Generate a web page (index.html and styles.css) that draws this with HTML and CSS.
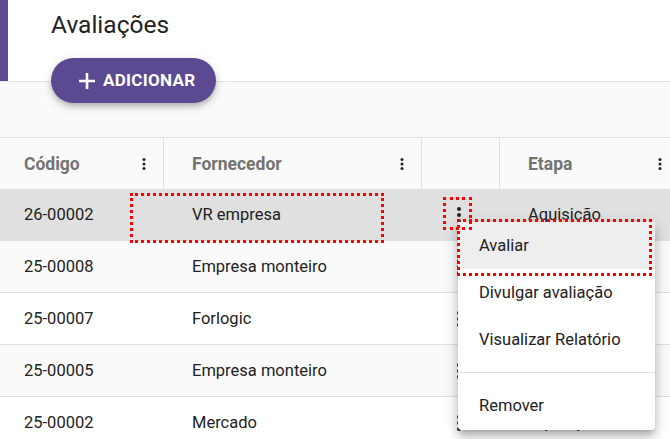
FILE: index.html
```html
<!DOCTYPE html>
<html lang="pt-BR">
<head>
<meta charset="utf-8">
<title>Avaliações</title>
<link rel="stylesheet" href="styles.css">
</head>
<body>
<div class="page">
  <header class="topbar">
    <div class="accent"></div>
    <div class="topbar-content">
      <h1 class="title">Avaliações</h1>
      <button class="add-btn" type="button">
        <svg class="plus" viewBox="0 0 18 18" aria-hidden="true"><path d="M9 1v16M1 9h16"/></svg>
        <span>ADICIONAR</span>
      </button>
    </div>
  </header>
  <div class="band"></div>

  <div class="grid">
    <div class="grid-head">
      <div class="head-cell first"><span>Código</span><svg class="kebab-sm" viewBox="0 0 24 24"><circle cx="12" cy="6" r="2"/><circle cx="12" cy="12" r="2"/><circle cx="12" cy="18" r="2"/></svg></div>
      <div class="head-cell"><span>Fornecedor</span><svg class="kebab-sm" viewBox="0 0 24 24"><circle cx="12" cy="6" r="2"/><circle cx="12" cy="12" r="2"/><circle cx="12" cy="18" r="2"/></svg></div>
      <div class="head-cell"></div>
      <div class="head-cell"><span>Etapa</span><svg class="kebab-sm" viewBox="0 0 24 24"><circle cx="12" cy="6" r="2"/><circle cx="12" cy="12" r="2"/><circle cx="12" cy="18" r="2"/></svg></div>
    </div>

    <div class="row hover">
      <div class="cell first">26-00002</div>
      <div class="cell">VR empresa</div>
      <div class="cell actions"><svg class="kebab" viewBox="0 0 24 24"><circle cx="12" cy="6" r="2"/><circle cx="12" cy="12" r="2"/><circle cx="12" cy="18" r="2"/></svg></div>
      <div class="cell">Aquisição</div>
    </div>
    <div class="row alt">
      <div class="cell first">25-00008</div>
      <div class="cell">Empresa monteiro</div>
      <div class="cell actions"><svg class="kebab" viewBox="0 0 24 24"><circle cx="12" cy="6" r="2"/><circle cx="12" cy="12" r="2"/><circle cx="12" cy="18" r="2"/></svg></div>
      <div class="cell">Aquisição</div>
    </div>
    <div class="row">
      <div class="cell first">25-00007</div>
      <div class="cell">Forlogic</div>
      <div class="cell actions"><svg class="kebab" viewBox="0 0 24 24"><circle cx="12" cy="6" r="2"/><circle cx="12" cy="12" r="2"/><circle cx="12" cy="18" r="2"/></svg></div>
      <div class="cell">Aquisição</div>
    </div>
    <div class="row alt">
      <div class="cell first">25-00005</div>
      <div class="cell">Empresa monteiro</div>
      <div class="cell actions"><svg class="kebab" viewBox="0 0 24 24"><circle cx="12" cy="6" r="2"/><circle cx="12" cy="12" r="2"/><circle cx="12" cy="18" r="2"/></svg></div>
      <div class="cell">Aquisição</div>
    </div>
    <div class="row">
      <div class="cell first">25-00002</div>
      <div class="cell">Mercado</div>
      <div class="cell actions"><svg class="kebab" viewBox="0 0 24 24"><circle cx="12" cy="6" r="2"/><circle cx="12" cy="12" r="2"/><circle cx="12" cy="18" r="2"/></svg></div>
      <div class="cell">Aquisição</div>
    </div>
  </div>

  <ul class="menu">
    <li class="menu-item active">Avaliar</li>
    <li class="menu-item">Divulgar avaliação</li>
    <li class="menu-item">Visualizar Relatório</li>
    <li class="menu-divider"></li>
    <li class="menu-item">Remover</li>
  </ul>

  <div class="mark mark-supplier"></div>
  <div class="mark mark-kebab"></div>
  <div class="mark mark-item"></div>
</div>
</body>
</html>
```

FILE: styles.css
```css
* { box-sizing: border-box; }

html, body {
  margin: 0;
  padding: 0;
}

body {
  font-family: Roboto, "Liberation Sans", Arial, sans-serif;
  color: #212121;
  background: #fff;
}

.page {
  position: relative;
  width: 670px;
  height: 439px;
  overflow: hidden;
}

/* top bar */
.topbar {
  display: flex;
  height: 82px;
  background: #fff;
  border-bottom: 1px solid #e4e4e4;
}

.accent {
  flex: none;
  width: 8px;
  background: #5b4a92;
}

.topbar-content {
  padding: 11px 0 0 43px;
}

.title {
  margin: 0;
  font-size: 24.5px;
  line-height: 28px;
  font-weight: 400;
  color: #232323;
}

.add-btn {
  position: relative;
  z-index: 2;
  margin-top: 19px;
  height: 45px;
  display: flex;
  align-items: center;
  gap: 7px;
  padding: 0 21px 0 27px;
  border: 0;
  border-radius: 23px;
  background: #5b4a92;
  color: #fff;
  font-family: Roboto, "Liberation Sans", Arial, sans-serif;
  font-weight: 700;
  font-size: 17px;
  line-height: 1;
  letter-spacing: 0.3px;
  box-shadow: 0 3px 5px -1px rgba(0,0,0,.18), 0 5px 8px 0 rgba(0,0,0,.12), 0 1px 12px 0 rgba(0,0,0,.08);
}

.plus {
  width: 18px;
  height: 18px;
  stroke: #fff;
  stroke-width: 2.6;
  fill: none;
}

.band {
  height: 55px;
  background: #fafafa;
}

/* grid */
.grid {
  width: 680px;
}

.grid-head {
  display: grid;
  grid-template-columns: 164px 258px 78px 180px;
  height: 52px;
  border-top: 1px solid #e0e0e0;
  background: #fafafa;
}

.head-cell {
  display: flex;
  align-items: center;
  justify-content: space-between;
  padding: 0 10px 0 28px;
  border-right: 1px solid #e0e0e0;
  font-size: 17.5px;
  font-weight: 700;
  color: #737373;
}

.head-cell.first {
  padding-left: 24px;
}

.kebab-sm {
  width: 18px;
  height: 18px;
  fill: #222;
  flex: none;
}

.row {
  display: grid;
  grid-template-columns: 164px 258px 78px 180px;
  height: 52px;
  border-bottom: 1px solid #e0e0e0;
  background: #fff;
  font-size: 16.5px;
  color: #222;
}

.row.alt { background: #fafafa; }
.row.hover { background: #e0e0e0; }

.cell {
  display: flex;
  align-items: center;
  padding-left: 28px;
  white-space: nowrap;
}

.cell.first { padding-left: 24px; }
.cell.actions { padding-left: 25px; }

.kebab {
  width: 24px;
  height: 24px;
  fill: #222;
  flex: none;
}

/* context menu */
.menu {
  position: absolute;
  left: 458px;
  top: 222px;
  z-index: 3;
  width: 197px;
  margin: 0;
  padding: 0 0 1px;
  list-style: none;
  background: #fff;
  border-radius: 4px;
  box-shadow: 0 5px 5px -3px rgba(0,0,0,.2), 0 8px 10px 1px rgba(0,0,0,.14), 0 3px 14px 2px rgba(0,0,0,.12);
}

.menu-item {
  height: 47px;
  display: flex;
  align-items: center;
  padding-left: 21px;
  font-size: 16.5px;
  color: #222;
  white-space: nowrap;
}

.menu-item.active { background: #eeeeee; }

.menu-divider {
  height: 1px;
  margin: 9px 0;
  background: #e0e0e0;
}

/* annotation marks */
.mark {
  position: absolute;
  z-index: 4;
  border: 3px dotted #ff0000;
}

.mark-supplier { left: 130px; top: 193px; width: 254px; height: 50px; }
.mark-kebab { left: 443px; top: 197px; width: 29px; height: 33px; }
.mark-item { left: 457px; top: 219px; width: 195px; height: 57px; }
```
